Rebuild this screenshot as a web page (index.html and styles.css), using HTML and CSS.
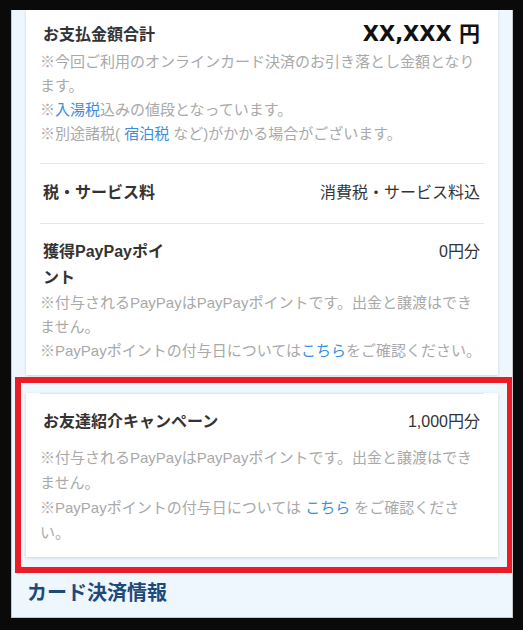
FILE: index.html
```html
<!DOCTYPE html>
<html lang="ja">
<head>
<meta charset="utf-8">
<link rel="stylesheet" href="styles.css">
</head>
<body>
<div class="panel">
  <div class="card card-main">
    <div class="section section-total">
      <div class="row">
        <div class="label">お支払金額合計</div>
        <div class="price">XX,XXX 円</div>
      </div>
      <div class="notes">
        <p>※今回ご利用のオンラインカード決済のお引き落とし金額となります。</p>
        <p>※<a class="link">入湯税</a>込みの値段となっています。</p>
        <p>※別途諸税( <a class="link">宿泊税</a> など)がかかる場合がございます。</p>
      </div>
    </div>
    <div class="section section-tax">
      <div class="row">
        <div class="label">税・サービス料</div>
        <div class="value">消費税・サービス料込</div>
      </div>
    </div>
    <div class="section section-points">
      <div class="row">
        <div class="label label-narrow">獲得PayPayポイント</div>
        <div class="value">0円分</div>
      </div>
      <div class="notes">
        <p>※付与されるPayPayはPayPayポイントです。出金と譲渡はできません。</p>
        <p>※PayPayポイントの付与日については<a class="link">こちら</a>をご確認ください。</p>
      </div>
    </div>
  </div>

  <div class="card card-campaign">
    <div class="section section-campaign">
      <div class="row">
        <div class="label">お友達紹介キャンペーン</div>
        <div class="value">1,000円分</div>
      </div>
      <div class="notes notes-loose">
        <p>※付与されるPayPayはPayPayポイントです。出金と譲渡はできません。</p>
        <p>※PayPayポイントの付与日については <a class="link">こちら</a> をご確認ください。</p>
      </div>
    </div>
  </div>

  <h2 class="heading">カード決済情報</h2>

  <div class="highlight"></div>
</div>
</body>
</html>
```

FILE: styles.css
```css
html, body {
  margin: 0;
  padding: 0;
  background: #0a0a0a;
}

body {
  font-family: "Liberation Sans", "Noto Sans CJK JP", sans-serif;
  color: #333333;
}

.panel {
  position: relative;
  box-sizing: border-box;
  width: 502px;
  height: 608px;
  margin: 10px 0 0 11px;
  background: #eef6fe;
  border: 1px solid #c4c9cf;
  border-top: none;
  padding: 0 14px;
  overflow: hidden;
}

.card {
  background: #ffffff;
  padding: 0 14px;
  box-shadow: 0 1px 3px rgba(0, 0, 0, 0.14);
}

.card-main {
  padding-bottom: 12px;
}

.card-campaign {
  margin-top: 18px;
  padding-bottom: 12px;
}

.section-total {
  padding-top: 12px;
  padding-bottom: 17px;
  border-bottom: 1px solid #e6e6e6;
}

.section-tax {
  padding: 16px 0 17px;
  border-bottom: 1px solid #e6e6e6;
}

.section-points {
  padding-top: 15px;
}

.section-campaign {
  border-top: 1px solid #e6e6e6;
  padding-top: 15px;
}

.row {
  display: flex;
  justify-content: space-between;
  align-items: flex-start;
  padding: 0 4px 0 3px;
}

.label {
  font-size: 16px;
  font-weight: bold;
  line-height: 26px;
  color: #333333;
}

.label-narrow {
  max-width: 128px;
}

.value {
  font-size: 16px;
  line-height: 26px;
  color: #333333;
}

.price {
  font-family: "DejaVu Sans", "Noto Sans CJK JP", sans-serif;
  font-size: 21px;
  font-weight: bold;
  line-height: 24px;
  color: #111111;
}

.notes {
  margin-top: 2px;
  font-size: 15px;
  line-height: 24px;
  color: #a9a9a9;
}

.section-points .notes {
  margin-top: 0;
}

.notes-loose {
  margin-top: 10px;
  line-height: 25px;
}

.notes p {
  margin: 0;
}

.link {
  color: #3b8de0;
  text-decoration: none;
}

.heading {
  margin: 22px 0 0 1px;
  font-size: 20px;
  line-height: 28px;
  font-weight: bold;
  color: #1e4a7b;
}

.highlight {
  position: absolute;
  left: 3px;
  top: 367px;
  width: 498px;
  height: 196px;
  box-sizing: border-box;
  border: 6px solid #ec1c26;
}
```
